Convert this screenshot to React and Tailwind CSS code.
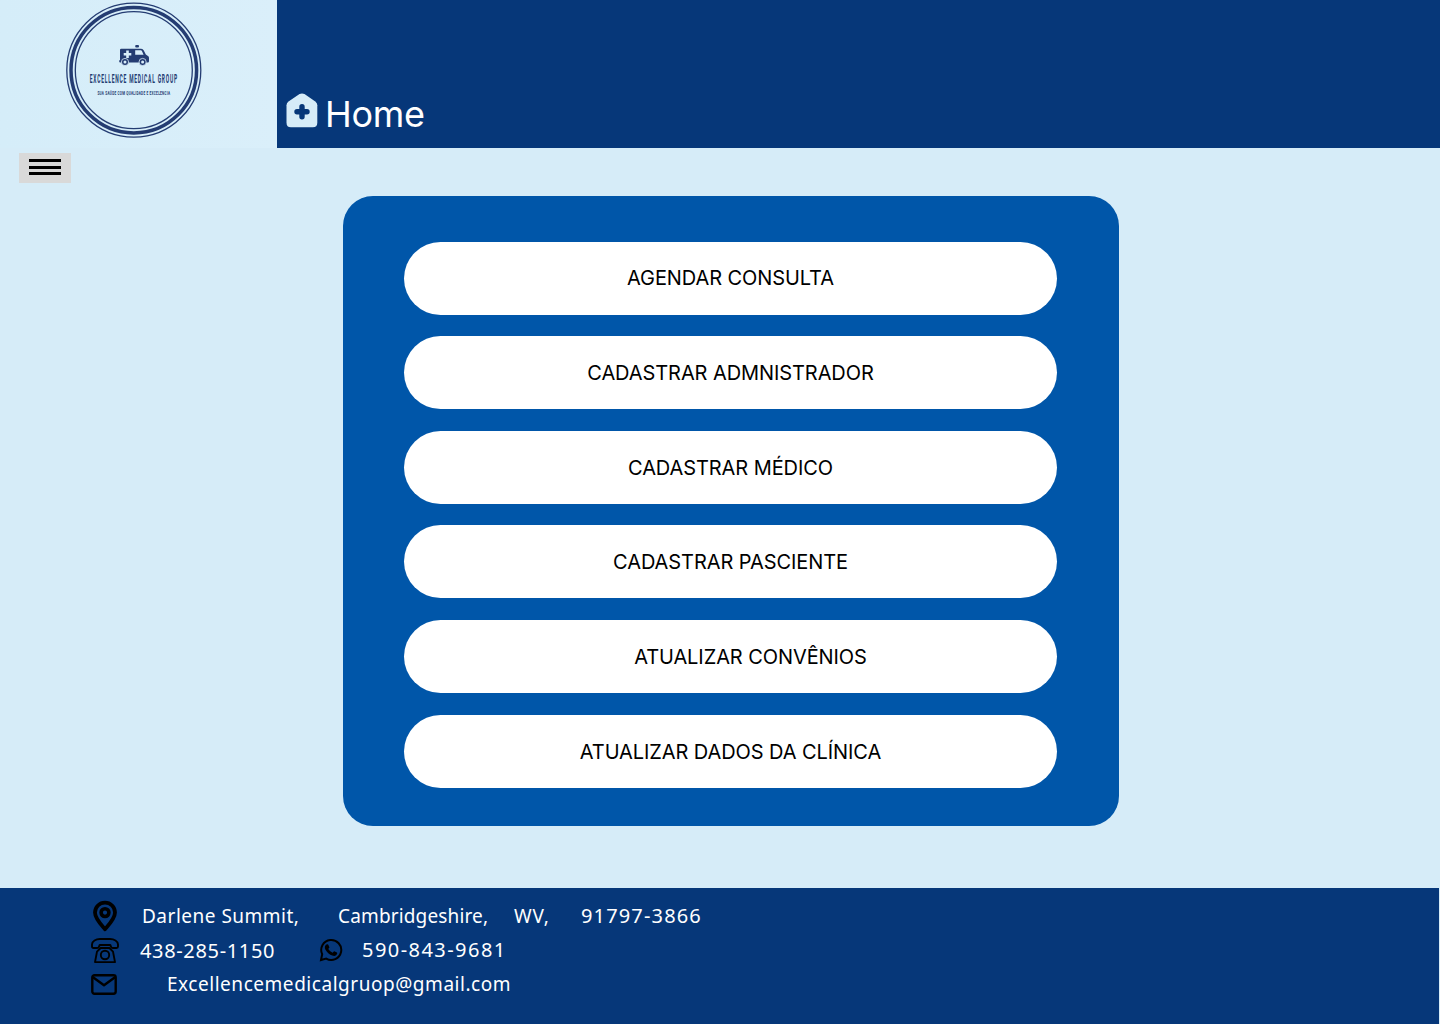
const actions = [
  { label: "AGENDAR CONSULTA", cls: "h-[73px] mb-[21px] pb-px" },
  { label: "CADASTRAR ADMNISTRADOR", cls: "h-[73px] mb-[22px]" },
  { label: "CADASTRAR MÉDICO", cls: "h-[73px] mb-[21px]" },
  { label: "CADASTRAR PASCIENTE", cls: "h-[73px] mb-[22px]" },
  { label: "ATUALIZAR CONVÊNIOS", cls: "h-[73px] mb-[22px] pl-[40px]" },
  { label: "ATUALIZAR DADOS DA CLÍNICA", cls: "h-[73px]" },
];

function Logo() {
  return (
    <svg className="ml-[66px] mt-[2px] block" width="136" height="136" viewBox="66 2 136 136">
      <g fill="none" stroke="#243c72">
        <circle cx="133.8" cy="70.2" r="67" strokeWidth="1.3" />
        <circle cx="133.8" cy="70.2" r="62.8" strokeWidth="3.5" />
        <circle cx="133.8" cy="70.2" r="58.5" strokeWidth="1.3" />
      </g>
      <g fill="#243c72">
        <rect x="135.2" y="45.1" width="3.8" height="2.4" rx="1" />
        <path d="M121.2 48.8H141.2Q143 48.8 143.8 50.4L145.8 54.6L148 56Q149 56.7 149 58V61.2Q149 62.4 147.8 62.4H120.2Q119.2 62.4 119.2 61.4V60.4L120 60V50Q120 48.8 121.2 48.8Z" />
        <circle cx="125" cy="62" r="3.6" stroke="#d9eefa" strokeWidth=".8" />
        <circle cx="142.6" cy="62" r="3.6" stroke="#d9eefa" strokeWidth=".8" />
      </g>
      <g fill="#d9eefa">
        <path d="M126.2 50.4h2.6v2.5h2.5v2.6h-2.5V58h-2.6v-2.5h-2.5v-2.6h2.5Z" />
        <path d="M135.2 50.2h5.6q.8 0 1.1.8l1.7 3.7h-8.4Z" />
        <circle cx="125" cy="62" r="1.5" />
        <circle cx="142.6" cy="62" r="1.5" />
      </g>
      <g fill="#243c72" fontFamily="Roboto, sans-serif">
        <text transform="translate(89.8 82.8) scale(.38 1)" fontSize="13" fontWeight="700" textLength="230" lengthAdjust="spacing">EXCELLENCE MEDICAL GROUP</text>
        <text transform="translate(97.4 94.9) scale(.65 1)" fontSize="4.8" fontWeight="700" textLength="112" lengthAdjust="spacing">SUA SAÚDE COM QUALIDADE E EXCELENCIA</text>
      </g>
    </svg>
  );
}

function HomeIcon() {
  return (
    <svg className="ml-[9px] mt-[93px] shrink-0" width="32" height="35" viewBox="0 0 32 35">
      <path fill="#d6ecf8" d="M13.5 1.1Q16 0 18.5 1.1L29.3 8.4Q31.3 10 31.3 12.3V29.8Q31.3 34.3 26.8 34.3H4.9Q.5 34.3 .5 29.8V12.3Q.5 10 2.5 8.4Z" />
      <path stroke="#063779" strokeWidth="5.4" strokeLinecap="round" d="M16 13.7v10M11 18.7h10" />
    </svg>
  );
}

function PinIcon() {
  return (
    <svg width="24" height="32" viewBox="0 0 24 32" className="shrink-0">
      <path fill="none" stroke="#000" strokeWidth="3.8" strokeLinejoin="round" d="M12 29.3C9 25.8 2 18.8 2 12.6a10 10 0 0 1 20 0C22 18.8 15 25.8 12 29.3Z" />
      <circle cx="12" cy="12.6" r="3.9" fill="none" stroke="#000" strokeWidth="3.6" />
    </svg>
  );
}

function PhoneIcon() {
  return (
    <svg width="28" height="26" viewBox="0 0 28 26" className="shrink-0" fill="none" stroke="#000" strokeWidth="1.9" strokeLinejoin="round">
      <path d="M1 8.5V6.5C1 3 5 1 9 1h10c4 0 8 2 8 5.5v2q0 1.5-1.5 1.5h-3.6q-1.3 0-1.8-1.2L19.3 7H8.7L7.9 8.8Q7.4 10 6.1 10H2.5Q1 10 1 8.5Z" />
      <path d="M9.6 10h8.8l3.6 3.6 2 10.5H4l2-10.5Z" />
      <circle cx="14" cy="17" r="4.2" />
    </svg>
  );
}

function WhatsIcon() {
  return (
    <svg width="24" height="24" viewBox="0 0 24 24" className="-ml-px mb-[2px] shrink-0">
      <path fill="none" stroke="#000" strokeWidth="2" d="M2 22l1.2-5.8A10 10 0 1 1 7.2 20.6Z" />
      <path d="M8.2 6.3Q9 6 9.4 6.9l.9 2q.3.7-.3 1.2l-.7.8q1.6 2.7 4.3 3.9l1.2-1.3q.4-.4 1-.1l2.1 1.1q.5.3.3 1-.6 2.2-2.9 2.4-4.2-.1-7.4-4.1-3.6-4.3-1-7.1.5-.4 1.3-.4Z" />
    </svg>
  );
}

function MailIcon() {
  return (
    <svg width="26" height="21" viewBox="0 0 26 21" className="shrink-0" fill="none" stroke="#000" strokeWidth="2.4" strokeLinejoin="round">
      <rect x="1.3" y="1.3" width="23.4" height="18.4" rx="2.2" />
      <path d="M2 3.2l11 8 11-8" />
    </svg>
  );
}

export default function App() {
  return (
    <div className="flex h-[1024px] w-[1440px] flex-col overflow-hidden bg-[#d6ecf8] font-['Inter',sans-serif]">
      <header className="flex h-[148px] shrink-0">
        <div className="w-[277px] shrink-0 bg-linear-to-r from-[#d5edf9] to-[#daeffa]">
          <Logo />
        </div>
        <div className="flex flex-1 items-start bg-[#063779]">
          <HomeIcon />
          <h1 className="ml-[7px] mt-[92px] text-[36px] leading-[44px] tracking-[-0.3px] text-white">Home</h1>
        </div>
      </header>

      <main className="flex h-[740px] shrink-0 items-start">
        <button aria-label="Menu" className="ml-[19px] mt-[5px] flex h-[30px] w-[52px] flex-col items-center bg-[#d9d9d9] pt-[6px]">
          <span className="h-[3px] w-8 bg-black" />
          <span className="mt-1 h-[3px] w-8 bg-black" />
          <span className="mt-[3px] h-[3px] w-8 bg-black" />
        </button>
        <section className="ml-[272px] mt-12 flex h-[630px] w-[776px] flex-col rounded-[30px] bg-[#0056a9] pl-[61px] pt-[46px]">
          {actions.map((a) => (
            <button key={a.label} className={`flex w-[653px] shrink-0 items-center justify-center rounded-[37px] bg-white text-[20px] tracking-[-0.08px] text-black ${a.cls}`}>
              {a.label}
            </button>
          ))}
        </section>
      </main>

      <footer className="mr-px h-[136px] bg-[#063779] pl-[91px] pt-[12px] font-['Noto_Sans',sans-serif] text-[19px] leading-8 whitespace-nowrap text-white">
        <div className="flex h-8 items-center">
          <span className="ml-[2px] flex"><PinIcon /></span>
          <span className="ml-[25px] w-[196px] tracking-[0.5px]">Darlene Summit,</span>
          <span className="w-[176px] tracking-[0.15px]">Cambridgeshire,</span>
          <span className="w-[67px] tracking-[0.8px]">WV,</span>
          <span className="text-[20px] tracking-[1.15px]">91797-3866</span>
        </div>
        <div className="mt-[6px] flex h-[26px] items-center">
          <PhoneIcon />
          <span className="ml-[21px] w-[180px] text-[20px] tracking-[0.65px]">438-285-1150</span>
          <WhatsIcon />
          <span className="mb-[3px] ml-[19px] text-[20px] tracking-[1.45px]">590-843-9681</span>
        </div>
        <div className="mt-[5px] flex h-[30px] items-center">
          <MailIcon />
          <span className="ml-[50px] tracking-[0.54px]">Excellencemedicalgruop@gmail.com</span>
        </div>
      </footer>
    </div>
  );
}
